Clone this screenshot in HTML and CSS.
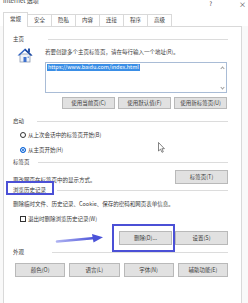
FILE: index.html
```html
<!DOCTYPE html>
<html lang="zh-CN">
<head>
  <meta charset="UTF-8">
  <title>Internet 选项</title>
  <meta name="viewport" content="width=device-width, initial-scale=1.0">
  <link rel="stylesheet" href="styles.css">
</head>
<body>
  <div class="window">
    <!-- Barra de título -->
    <div class="titlebar">
      <span class="title">Internet 选项</span>
      <span class="help">?</span>
      <span class="close">×</span>
    </div>

    <!-- Abas -->
    <div class="tabs">
      <div class="tab active">常规</div>
      <div class="tab">安全</div>
      <div class="tab">隐私</div>
      <div class="tab">内容</div>
      <div class="tab">连接</div>
      <div class="tab">程序</div>
      <div class="tab">高级</div>
    </div>

    <div class="page">
      <!-- Página inicial -->
      <div class="group-head head-home"><span>主页</span><i class="rule"></i></div>
      <div class="home">
        <svg class="house" viewBox="0 0 16 16">
          <rect x="11" y="1.5" width="2" height="4" fill="#2a56a8"/>
          <rect x="3" y="7" width="10" height="8" fill="#eef2f8" stroke="#8d9bb2" stroke-width="0.8"/>
          <polygon points="0.5,8.5 8,1.5 15.5,8.5 13.5,8.5 8,3.6 2.5,8.5" fill="#2f63c2"/>
          <polygon points="8,1.5 15.5,8.5 13.5,8.5 8,3.6" fill="#1f4a9e"/>
          <rect x="6.5" y="10" width="3" height="5" fill="#3b6fce"/>
          <rect x="10.5" y="9.5" width="1.5" height="1.5" fill="#7ea2dc"/>
        </svg>
        <div class="home-main">
          <p class="line">若要创建多个主页标签页，请在每行输入一个地址(R)。</p>
          <div class="urlbox">
            <span class="sel">https://www.baidu.com/index.html</span>
            <div class="scroll">
              <i class="chev up"></i>
              <i class="chev down"></i>
            </div>
          </div>
          <div class="btn-row">
            <button class="btn">使用当前页(C)</button>
            <button class="btn">使用默认值(F)</button>
            <button class="btn">使用新标签页(U)</button>
          </div>
        </div>
      </div>

      <!-- Inicialização -->
      <div class="group-head head-start"><span>启动</span><i class="rule"></i></div>
      <label class="option first"><i class="radio"></i>从上次会话中的标签页开始(B)</label>
      <label class="option second"><i class="radio checked"></i>从主页开始(H)</label>

      <!-- Abas -->
      <div class="group-head head-tabs"><span>标签页</span><i class="rule"></i></div>
      <div class="tab-row">
        <p class="line">更改网页在标签页中的显示方式。</p>
        <button class="btn btn-tall">标签页(T)</button>
      </div>

      <!-- Histórico -->
      <div class="group-head head-history"><span>浏览历史记录</span><i class="rule"></i></div>
      <p class="line history-desc">删除临时文件、历史记录、Cookie、保存的密码和网页表单信息。</p>
      <label class="option check-row"><i class="checkbox"></i>退出时删除浏览历史记录(W)</label>
      <div class="btn-row history-btns">
        <button class="btn btn-tall">删除(D)...</button>
        <button class="btn btn-tall">设置(S)</button>
      </div>

      <!-- Aparência -->
      <div class="group-head head-look"><span>外观</span><i class="rule"></i></div>
      <div class="look-grid">
        <button class="btn btn-tall">颜色(O)</button>
        <button class="btn btn-tall">语言(L)</button>
        <button class="btn btn-tall">字体(N)</button>
        <button class="btn btn-tall">辅助功能(E)</button>
      </div>
    </div>

    <!-- Anotações por cima do diálogo -->
    <div class="mark mark-history"></div>
    <div class="mark mark-delete"></div>
    <svg class="arrow" viewBox="0 0 50 12">
      <defs>
        <linearGradient id="arrowGrad" x1="0" x2="1" y1="0" y2="0">
          <stop offset="0" stop-color="#aeb2f2"/>
          <stop offset="1" stop-color="#4a52d8"/>
        </linearGradient>
      </defs>
      <path d="M2 8.5 L40 5" stroke="url(#arrowGrad)" stroke-width="2.6" stroke-linecap="round"/>
      <polygon points="37,1 48,4.2 38.5,9.5" fill="#4a52d8"/>
    </svg>
    <svg class="cursor" viewBox="0 0 7 11">
      <polygon points="0.5,0.5 0.5,9 2.5,7.2 4,10.3 5.3,9.7 3.9,6.7 6.4,6.7" fill="#fff" stroke="#333" stroke-width="0.6"/>
    </svg>
  </div>
</body>
</html>
```

FILE: styles.css
```css
/* Reset básico */
* {
  box-sizing: border-box;
  margin: 0;
  padding: 0;
}

body {
  width: 248px;
  height: 303px;
  overflow: hidden;
  background: #f9f9f9;
  font-family: "Noto Sans CJK SC", "Noto Sans", sans-serif;
  font-size: 5.5px;
  color: #3a3a3a;
}

.window {
  position: relative;
  height: 303px;
}

/* Barra de título */
.titlebar {
  display: flex;
  height: 12px;
  padding: 0 2px 0 3px;
  background: #fff;
  line-height: 6px;
  font-size: 6px;
}

.title {
  flex: 1;
  margin-top: -2px;
}

.help {
  margin: 1px 27px 0 0;
}

.close {
  margin-top: 1px;
  font-size: 7px;
}

/* Abas */
.tabs {
  display: flex;
  align-items: flex-end;
  height: 14px;
  padding-left: 3px;
  background: #fff;
}

.tab {
  width: 25px;
  height: 12px;
  margin-left: -1px;
  border: 1px solid #d9d9d9;
  border-bottom: none;
  background: #fff;
  text-align: center;
  line-height: 11px;
}

.tab:first-child {
  margin-left: 0;
}

.tab.active {
  position: relative;
  height: 15px;
  margin-bottom: -1px;
  line-height: 12px;
}

/* Página de conteúdo */
.page {
  height: 277px;
  margin: 0 6px 0 3px;
  padding: 8px 13px 0 9px;
  border: 1px solid #d9d9d9;
  border-bottom: none;
  background: #fff;
}

.line {
  line-height: 8px;
  white-space: nowrap;
}

.group-head {
  display: flex;
  align-items: center;
  height: 8px;
  line-height: 8px;
}

.group-head .rule {
  flex: 1;
  height: 1px;
  background: #dcdcdc;
}

.head-home .rule { margin-left: 24px; }
.head-start { margin-top: 8px; }
.head-start .rule { margin-left: 13px; }
.head-tabs { margin-top: 4px; }
.head-tabs .rule { margin-left: 8px; }
.head-history { margin-top: 2px; }
.head-history .rule { margin-left: 11px; }
.head-look { margin-top: 3px; }
.head-look .rule { margin-left: 28px; }

/* Bloco da página inicial */
.home {
  display: flex;
  margin-top: 5px;
}

.house {
  flex: none;
  width: 16px;
  height: 16px;
  margin: -1px 12px 0 4px;
}

.home-main {
  flex: 1;
  margin-right: 1px;
}

.urlbox {
  display: flex;
  justify-content: space-between;
  height: 31px;
  margin-top: 6px;
  padding: 0 0 0 1px;
  border: 1px solid #a9bcd6;
}

.sel {
  align-self: flex-start;
  margin-top: 1px;
  padding: 0 1px;
  background: #3a8ee6;
  color: #fff;
  line-height: 7px;
}

.scroll {
  display: flex;
  flex-direction: column;
  justify-content: space-between;
  align-items: center;
  width: 8px;
  padding: 4px 0 3px;
}

.chev {
  width: 3px;
  height: 3px;
  border-left: 1px solid #a0a0a0;
  border-top: 1px solid #a0a0a0;
  transform: rotate(45deg);
}

.chev.down {
  transform: rotate(225deg);
}

/* Botões */
.btn-row {
  display: flex;
  justify-content: flex-end;
  gap: 3px;
  margin-top: 4px;
}

.btn {
  width: 53px;
  height: 12px;
  border: 1px solid #b9b9b9;
  background: #e1e1e1;
  font: inherit;
  color: inherit;
  line-height: 10px;
  white-space: nowrap;
}

.btn-tall {
  height: 14px;
  line-height: 12px;
}

/* Opções de inicialização */
.option {
  display: flex;
  align-items: center;
  gap: 2px;
  height: 8px;
  padding-left: 7px;
  white-space: nowrap;
}

.option.first { margin-top: 6px; }
.option.second { margin-top: 7px; }

.radio {
  width: 6px;
  height: 6px;
  border: 1px solid #333;
  border-radius: 50%;
}

.radio.checked {
  border-color: #0a64d8;
  background: #0a64d8;
  box-shadow: inset 0 0 0 1px #fff;
}

.checkbox {
  width: 6px;
  height: 6px;
  border: 1px solid #333;
}

.tab-row {
  display: flex;
  justify-content: space-between;
  align-items: flex-end;
  margin-top: 4px;
}

.history-desc { margin-top: 6px; }
.check-row { margin-top: 7px; }
.history-btns { margin-top: 8px; }

.look-grid {
  display: grid;
  grid-template-columns: repeat(4, 1fr);
  gap: 4px;
  margin-top: 7px;
  padding-left: 2px;
}

.look-grid .btn {
  width: auto;
}

/* Anotações */
.mark {
  position: absolute;
  border: 2px solid #4b50d6;
}

.mark-history {
  left: 6px;
  top: 181px;
  width: 48px;
  height: 14px;
}

.mark-delete {
  left: 112px;
  top: 224px;
  width: 63px;
  height: 28px;
}

.arrow {
  position: absolute;
  left: 55px;
  top: 233px;
  width: 50px;
  height: 12px;
}

.cursor {
  position: absolute;
  left: 158px;
  top: 142px;
  width: 7px;
  height: 11px;
}
```
